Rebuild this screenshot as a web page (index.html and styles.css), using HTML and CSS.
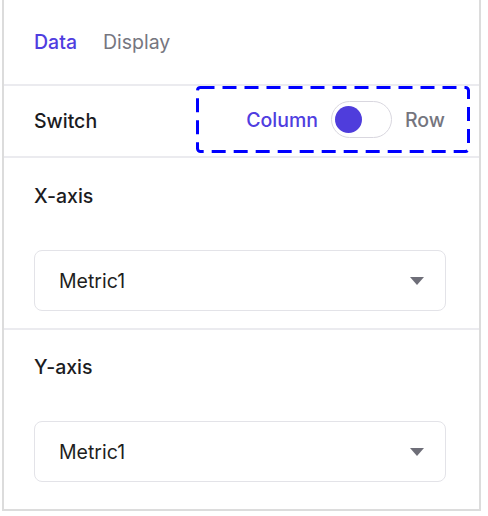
FILE: index.html
```html
<!DOCTYPE html>
<html>
<head>
<meta charset="utf-8">
<link rel="stylesheet" href="styles.css">
</head>
<body>
<div class="panel">
  <div class="tabs">
    <span class="tab active">Data</span>
    <span class="tab">Display</span>
  </div>
  <div class="switch-row">
    <span class="label">Switch</span>
    <div class="toggle-group">
      <svg class="marker" width="274" height="67" viewBox="0 0 274 67"><rect x="1.5" y="1.5" width="271" height="64" rx="3" ry="3" fill="none" stroke="#0000ff" stroke-width="3" stroke-dasharray="14 8"/></svg>
      <span class="opt on">Column</span>
      <span class="toggle"><span class="knob"></span></span>
      <span class="opt">Row</span>
    </div>
  </div>
  <div class="section">
    <div class="label">X-axis</div>
    <div class="select"><span>Metric1</span><span class="caret"></span></div>
  </div>
  <div class="section last">
    <div class="label">Y-axis</div>
    <div class="select"><span>Metric1</span><span class="caret"></span></div>
  </div>
</div>
</body>
</html>
```
FILE: styles.css
```css
* { box-sizing: border-box; }
html, body { margin: 0; padding: 0; background: #fff; }
body { font-family: Inter, Roboto, "Liberation Sans", sans-serif; }
.panel {
  margin-left: 2px;
  width: 479px;
  height: 511px;
  border: 2px solid #dcdcdc;
  border-top: none;
  display: flex;
  flex-direction: column;
}
.tabs {
  height: 86px;
  border-bottom: 2px solid #ebebef;
  display: flex;
  align-items: center;
  gap: 26px;
  padding: 0 30px 0 30px;
  font-size: 19.5px;
}
.tab { color: #76767f; }
.tab.active { color: #4f3de0; font-weight: 500; }
.switch-row {
  height: 72px;
  border-bottom: 2px solid #ebebef;
  display: flex;
  align-items: center;
  justify-content: space-between;
  padding: 0 9px 0 30px;
}
.label { font-size: 19.5px; font-weight: 500; color: #1c1c1f; line-height: 24px; }
.toggle-group {
  position: relative;
  width: 274px;
  height: 67px;
  margin-top: -3px;
  display: flex;
  align-items: center;
  justify-content: flex-end;
  padding-right: 25px;
  font-size: 19.5px;
  font-weight: 500;
}
.marker { position: absolute; left: 0; top: 0; }
.opt { color: #75757e; }
.opt.on { color: #4f3de0; }
.toggle {
  width: 61px;
  height: 37px;
  border: 1.5px solid #d9d7df;
  border-radius: 19px;
  margin: 0 13px 0 13px;
  display: flex;
  align-items: center;
  padding-left: 3px;
}
.knob { width: 27px; height: 27px; border-radius: 50%; background: #4f3ddc; }
.section {
  height: 172px;
  border-bottom: 2px solid #ebebef;
  padding: 26px 33px 0 30px;
}
.section.last { border-bottom: none; flex: 1; padding-top: 25px; }
.select {
  margin-top: 42px;
  height: 61px;
  border: 1.5px solid #e3e3e8;
  border-radius: 8px;
  display: flex;
  align-items: center;
  justify-content: space-between;
  padding: 0 21px 0 24px;
  font-size: 19.5px;
  color: #1f1f22;
}
.caret {
  width: 0; height: 0;
  border-left: 7.5px solid transparent;
  border-right: 7.5px solid transparent;
  border-top: 8px solid #6e6e78;
}
```
